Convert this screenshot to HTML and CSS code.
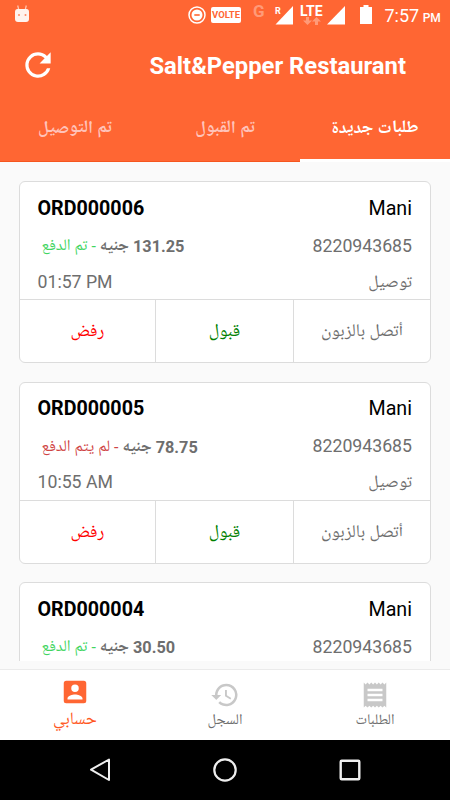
FILE: index.html
```html
<!DOCTYPE html>
<html lang="ar">
<head>
<meta charset="utf-8">
<title>Salt&amp;Pepper Restaurant</title>
<link rel="stylesheet" href="styles.css">
</head>
<body>
<div class="screen">
  <header class="header">
    <div class="status">
      <svg class="droid" width="16" height="18" viewBox="0 0 16 18"><path d="M3.700 0.500l1 4M12.300 0.500l-1 4" stroke="#ffc9b5" stroke-width="1.2"/><path d="M3.500 4h9q2.500 0 2.500 3v7q0 3-3 3H4q-3 0-3-3V7q0-3 2.500-3z" fill="#fff3ee"/><circle cx="5" cy="10" r="1" fill="#ff8a63"/><circle cx="11.500" cy="10" r="1" fill="#ff8a63"/></svg>
      <svg class="dnd" width="18" height="18" viewBox="0 0 18 18"><circle cx="9" cy="9" r="8" fill="none" stroke="#fff" stroke-width="1.500"/><circle cx="9" cy="9" r="5.500" fill="#fff"/><path d="M6.300 9h5.400" stroke="#ff6633" stroke-width="1.600"/></svg>
      <span class="volte">VOLTE</span>
      <span class="gnet">G</span>
      <svg class="sig1" width="20" height="20" viewBox="0 0 20 20"><path d="M1.500 19.500L19 1v18.500z" fill="#fff"/></svg>
      <span class="roam">R</span>
      <span class="lte">LTE</span>
      <svg class="arrows" width="18" height="8" viewBox="0 0 18 8"><path d="M3 0h3v3.500h3L4.500 8 0 3.500h3zM12 8h3V4.500h3L13.500 0 9 4.500h3z" fill="#ff9a78"/></svg>
      <svg class="sig2" width="20" height="20" viewBox="0 0 20 20"><path d="M1 19.500L19 1v18.500z" fill="#fff"/></svg>
      <svg class="batt" width="12" height="19" viewBox="0 0 12 19"><path d="M3.500 0h5v2H12v17H0V2h3.500z" fill="#fff"/></svg>
      <span class="clock">7:57 <small>PM</small></span>
    </div>
    <div class="titlebar">
      <svg class="refresh" width="38" height="38" viewBox="0 0 24 24"><path fill="#fff" d="M17.650 6.350A7.950 7.950 0 0 0 12 4a8 8 0 1 0 7.730 10h-2.080A6 6 0 1 1 12 6c1.660 0 3.140.690 4.220 1.780L13 11h7V4z"/></svg>
      <h1>Salt&amp;Pepper Restaurant</h1>
    </div>
    <nav class="tabs" dir="rtl">
      <a class="tab active"><span>طلبات جديدة</span></a>
      <a class="tab"><span>تم القبول</span></a>
      <a class="tab"><span>تم التوصيل</span></a>
    </nav>
  </header>

  <main class="list">
    <article class="card">
      <div class="info">
        <div class="line top"><b>ORD000006</b><span>Mani</span></div>
        <div class="line mid"><span class="pay" dir="rtl"><b>131.25 <i>جنيه</i></b><i class="paid"> - تم الدفع</i></span><span>8220943685</span></div>
        <div class="line low"><span>01:57 PM</span><span class="kind">توصيل</span></div>
      </div>
      <div class="actions"><span class="reject">رفض</span><span class="accept">قبول</span><span>أتصل بالزبون</span></div>
    </article>
    <article class="card">
      <div class="info">
        <div class="line top"><b>ORD000005</b><span>Mani</span></div>
        <div class="line mid"><span class="pay" dir="rtl"><b>78.75 <i>جنيه</i></b><i class="unpaid"> - لم يتم الدفع</i></span><span>8220943685</span></div>
        <div class="line low"><span>10:55 AM</span><span class="kind">توصيل</span></div>
      </div>
      <div class="actions"><span class="reject">رفض</span><span class="accept">قبول</span><span>أتصل بالزبون</span></div>
    </article>
    <article class="card">
      <div class="info">
        <div class="line top"><b>ORD000004</b><span>Mani</span></div>
        <div class="line mid"><span class="pay" dir="rtl"><b>30.50 <i>جنيه</i></b><i class="paid"> - تم الدفع</i></span><span>8220943685</span></div>
        <div class="line low"></div>
      </div>
      <div class="actions"></div>
    </article>
  </main>

  <nav class="bottom">
    <a class="item current">
      <svg width="30" height="30" viewBox="0 0 24 24"><path fill="#ff6633" d="M3 5v14a2 2 0 0 0 2 2h14a2 2 0 0 0 2-2V5a2 2 0 0 0-2-2H5a2 2 0 0 0-2 2zm12 4a3 3 0 1 1-6 0 3 3 0 0 1 6 0zm-9 8c0-2 4-3.100 6-3.100s6 1.100 6 3.100v1H6z"/></svg>
      <span>حسابي</span>
    </a>
    <a class="item">
      <svg width="30" height="30" viewBox="0 0 24 24"><path fill="#c8c8c8" d="M13 3a9 9 0 0 0-9 9H1l3.890 3.890.070.140L9 12H6a7 7 0 1 1 2.060 4.940l-1.420 1.420A9 9 0 1 0 13 3zm-1 5v5l4.280 2.540.720-1.210-3.500-2.080V8z"/></svg>
      <span>السجل</span>
    </a>
    <a class="item">
      <svg width="30" height="30" viewBox="0 0 24 24"><path fill="#c8c8c8" d="M18 17H6v-2h12zm0-4H6v-2h12zm0-4H6V7h12zM3 22l1.500-1.500L6 22l1.500-1.500L9 22l1.500-1.500L12 22l1.500-1.500L15 22l1.500-1.500L18 22l1.500-1.500L21 22V2l-1.500 1.500L18 2l-1.500 1.500L15 2l-1.500 1.500L12 2l-1.500 1.500L9 2 7.500 3.500 6 2 4.500 3.500 3 2z"/></svg>
      <span>الطلبات</span>
    </a>
  </nav>

  <footer class="sysnav">
    <svg width="24" height="26" viewBox="0 0 24 26"><path d="M21 2.500v20.500L3 12.700z" fill="none" stroke="#eee" stroke-width="2" stroke-linejoin="round"/></svg>
    <svg width="24" height="26" viewBox="0 0 24 26"><circle cx="12" cy="13" r="10.700" fill="none" stroke="#eee" stroke-width="2.200"/></svg>
    <svg width="24" height="26" viewBox="0 0 24 26"><rect x="2.700" y="3.700" width="18.600" height="18.600" rx="1" fill="none" stroke="#eee" stroke-width="2.400"/></svg>
  </footer>
</div>
</body>
</html>
```
FILE: styles.css
```css
* { box-sizing: border-box; }
body {
  margin: 0;
  font-family: Roboto, "Noto Naskh Arabic UI", "Noto Sans Arabic", "DejaVu Sans", sans-serif;
  background: #fafafa;
}
i { font-style: normal; }
.screen { width: 450px; height: 800px; display: flex; flex-direction: column; overflow: hidden; }

.header { height: 162px; flex: none; background: #ff6633; color: #fff; }
.status { height: 30px; position: relative; line-height: 1; }
.status > * { position: absolute; }
.droid { left: 14px; top: 5px; }
.dnd { left: 188px; top: 6px; }
.volte { left: 211px; top: 7px; width: 30px; height: 16px; border-radius: 2px; background: #fff; color: #ff6633; font-size: 9.5px; font-weight: 700; line-height: 16px; text-align: center; }
.gnet { left: 253px; top: 3px; font-size: 17px; font-weight: 700; color: #ff9a78; }
.sig1 { left: 274px; top: 5px; }
.roam { left: 275px; top: 7px; font-size: 9px; font-weight: 700; }
.lte { left: 300px; top: 4px; font-size: 14px; font-weight: 700; }
.arrows { left: 303px; top: 17px; }
.sig2 { left: 326px; top: 5px; }
.batt { left: 360px; top: 5px; }
.clock { left: 384.5px; top: 7px; font-size: 18px; white-space: nowrap; }
.clock small { font-size: 12px; font-weight: 500; margin-left: -1px; }

.titlebar { height: 70px; display: flex; align-items: center; justify-content: space-between; padding: 1px 44px 0 18.5px; }
.titlebar h1 { margin: 0; font-size: 23.8px; font-weight: 700; line-height: 28px; }
.titlebar .refresh { margin-top: -1px; }
.tabs { height: 62px; display: grid; grid-template-columns: repeat(3, 1fr); }
.tab { display: flex; align-items: center; justify-content: center; padding-bottom: 5px; font-size: 17.6px; font-weight: 700; color: #ffc3ba; border-bottom: 1px solid #f5561f; }
.tab.active { color: #fff; border-bottom: 3px solid #fff; padding-bottom: 3px; }

.list { height: 498.5px; flex: none; overflow: hidden; padding: 19px 19px 0; display: flex; flex-direction: column; gap: 18.700px; }
.card { height: 182px; flex: none; background: #fff; border: 1.500px solid #dcdcdc; border-radius: 6px; display: flex; flex-direction: column; }
.info { height: 117px; padding: 7px 18px 0 17.500px; color: #6e6e6e; }
.line { display: flex; align-items: center; justify-content: space-between; height: 37px; font-size: 17.700px; }
.top { font-size: 19.700px; color: #000; height: 38px; }
.top b { font-weight: 700; }
.pay { font-size: 16.300px; padding-left: 4px; white-space: nowrap; }
.pay i { font-size: 16px; }
.pay b i { font-size: 16.500px; }
.paid { color: #41d55f; }
.unpaid { color: #cf4444; }
.kind { font-size: 17.600px; }
.low { height: 35px; }
.actions { flex: 1; display: grid; grid-template-columns: 135px 138px 1fr; border-top: 1.500px solid #dcdcdc; font-size: 17.800px; color: #6e6e6e; }
.actions span { display: flex; align-items: center; justify-content: center; border-left: 1.500px solid #dcdcdc; }
.actions .reject { color: #f00; border-left: 0; }
.actions .accept { color: #008000; }

.bottom { margin-top: 8px; height: 71.500px; flex: none; background: #fff; border-top: 1.500px solid #ebebeb; display: grid; grid-template-columns: repeat(3, 1fr); }
.item { display: flex; flex-direction: column; align-items: center; padding-top: 10px; font-size: 14.800px; line-height: 23px; color: #6e6e6e; }
.item.current { padding-top: 7px; font-size: 17.500px; line-height: 27px; color: #ff5722; }

.sysnav { height: 60px; flex: none; background: #000; display: flex; align-items: center; justify-content: space-between; padding: 0 88px; }
```
